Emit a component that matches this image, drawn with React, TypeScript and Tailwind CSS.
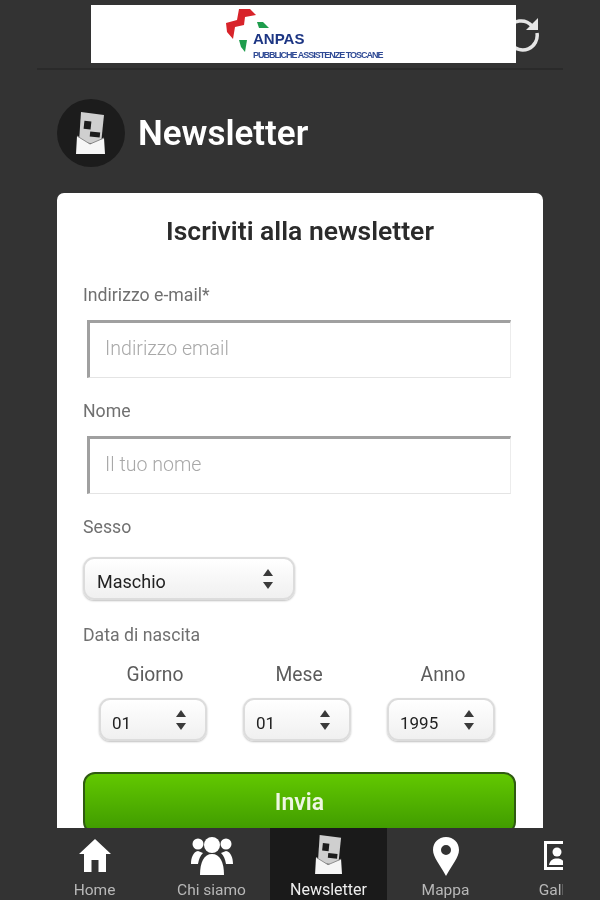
function NewsIcon({ w, h }: { w: number; h: number }) {
  return (
    <svg width={w} height={h} viewBox="0 0 30 42" fill="none">
      <polygon points="5,0 28,3 25,32 3,30" fill="#cfcfcf" />
      <rect x="8" y="9" width="7" height="8" fill="#1c1c1c" transform="rotate(6 11 13)" />
      <rect x="14" y="20" width="10" height="5" fill="#1c1c1c" transform="rotate(6 19 22)" />
      <polygon points="1,24 14,32 28,26 29,42 0,42" fill="#f6f6f6" />
      <polyline points="1,24 14,32 28,26" stroke="#8a8a8a" strokeWidth="1" fill="none" />
    </svg>
  );
}

function Stepper() {
  return (
    <svg width="12" height="24" viewBox="0 0 12 24" fill="#3a3a3a">
      <polygon points="6,2 11,9 1,9" />
      <polygon points="1,15 11,15 6,22" />
    </svg>
  );
}

function HomeIcon() {
  return (
    <svg width="32" height="33" viewBox="0 0 32 33" fill="#fff" className="mb-[5px]">
      <path d="M16 0 L32 15 L27 15 L27 33 L19.5 33 L19.5 21 L12.5 21 L12.5 33 L5 33 L5 15 L0 15 Z" />
    </svg>
  );
}

function UsersIcon() {
  return (
    <svg width="42" height="38" viewBox="0 0 42 38" fill="#fff" className="mb-[2px]">
      <circle cx="7" cy="7" r="5.5" />
      <circle cx="35" cy="7" r="5.5" />
      <path d="M7 14 C2 15 0 21 0 27 L7 27 C8 22 9 19 12 16 Z" />
      <path d="M35 14 C40 15 42 21 42 27 L35 27 C34 22 33 19 30 16 Z" />
      <circle cx="21" cy="8" r="8" />
      <path d="M21 17 C13 17 9 25 9 38 L33 38 C33 25 29 17 21 17 Z" />
    </svg>
  );
}

function PinIcon() {
  return (
    <svg width="26" height="39" viewBox="0 0 26 39" className="mb-[1px]">
      <path fillRule="evenodd" fill="#fff" d="M13 0 C20.5 0 26 5.5 26 13 C26 20 19 28 13 39 C7 28 0 20 0 13 C0 5.5 5.5 0 13 0 Z M13 8 A5 5 0 1 0 13 18 A5 5 0 1 0 13 8 Z" />
    </svg>
  );
}

function GalleryIcon() {
  return (
    <svg width="38" height="29" viewBox="0 0 38 29" fill="none" className="mb-[7px]">
      <rect x="1.5" y="1.5" width="30" height="26" stroke="#fff" strokeWidth="3" />
      <circle cx="13" cy="11" r="4.5" fill="#fff" />
      <path d="M5 24 C6 19 9 17.5 13 17.5 S20 19 21 24 Z" fill="#fff" />
    </svg>
  );
}

function Field({ label, placeholder }: { label: string; placeholder: string }) {
  return (
    <div>
      <div className="text-[17.7px] leading-[20px] text-[#707070]">{label}</div>
      <div className="mt-[15px] ml-[4px] mr-[6px] flex h-[58px] items-center border-t-[3px] border-l-[3px] border-t-[#a0a0a0] border-l-[#a0a0a0] border-r border-b border-r-[#ececec] border-b-[#e4e4e4] bg-white pb-[2px] pl-[15px] text-[19.6px] font-light text-[#a8a8a8]">
        {placeholder}
      </div>
    </div>
  );
}

function Select({ value, className, textClass }: { value: string; className: string; textClass: string }) {
  return (
    <div className={`flex items-center justify-between rounded-[11px] border-2 border-[#dcdcdc] bg-gradient-to-b from-white to-[#f0f0f0] shadow-[0_1px_2px_rgba(0,0,0,0.25)] ${className}`}>
      <span className={`text-[#222] ${textClass}`}>{value}</span>
      <Stepper />
    </div>
  );
}

function DatePart({ label, value }: { label: string; value: string }) {
  return (
    <div className="flex w-[108px] flex-col items-center">
      <div className="pl-[4px] text-[19.3px] leading-[24px] text-[#5c5c5c]">{label}</div>
      <Select value={value} className="mt-[11px] h-[43px] w-[108px] pl-[11px] pr-[18px]" textClass="pt-[9px] text-[17px]" />
    </div>
  );
}

function NavItem({ label, active, icon }: { label: string; active?: boolean; icon: React.ReactNode }) {
  return (
    <div className={`flex w-[117px] shrink-0 flex-col items-center ${active ? "bg-[#1a1a1a]" : ""}`}>
      <div className="flex h-[50px] items-end justify-center">{icon}</div>
      <div className={`mt-[3px] whitespace-nowrap leading-[20px] ${active ? "text-[16px] text-[#eeeeee]" : "text-[15.5px] text-[#b8b8b8]"}`}>{label}</div>
    </div>
  );
}

export default function App() {
  return (
    <div className="flex h-[900px] w-[600px] flex-col overflow-hidden bg-[#333333] font-['Roboto',sans-serif] blur-[0.6px]">
      <div className="mx-[37px] flex h-[70px] shrink-0 border-b-2 border-[#2a2a2a] pt-[5px]">
        <div className="relative z-10 ml-[54px] flex h-[58px] w-[425px] shrink-0 items-start bg-white pl-[134px] pt-[3px]">
          <svg width="46" height="46" viewBox="0 0 46 46" className="shrink-0">
            <polygon points="14,1 25,1 31,7 20,9 19,17 10,19 8,31 2,24 1,15 12,12" fill="#d8232a" />
            <polygon points="32,14 38,14 44,20 34,20" fill="#1f9d4d" />
            <polygon points="14,32 22,32 20,44 16,39" fill="#1f9d4d" />
          </svg>
          <div className="-ml-[18px] pt-[23px] font-['Liberation_Sans',sans-serif] text-[#1c3583]">
            <div className="text-[15px] font-bold leading-[16px]">ANPAS</div>
            <div className="mt-[3px] whitespace-nowrap text-[9px] font-bold leading-[10px] tracking-[-1px] text-[#2f4a95]">PUBBLICHE ASSISTENZE TOSCANE</div>
          </div>
        </div>
        <svg width="34" height="36" viewBox="0 0 34 36" fill="none" className="ml-[-11px] mt-[12px] shrink-0">
          <path d="M27 9 A14.5 14.5 0 0 0 3 12" stroke="#e6e6e6" strokeWidth="3.5" />
          <path d="M32 16 A14.5 14.5 0 0 1 6 27" stroke="#e6e6e6" strokeWidth="3.5" />
          <polygon points="33,1 33,13 21,13" fill="#e6e6e6" />
        </svg>
      </div>

      <div className="min-h-0 flex-1 overflow-hidden px-[57px]">
        <div className="mt-[28px] flex h-[70px] items-center">
          <div className="flex h-[68px] w-[68px] items-center justify-center rounded-full bg-[#1c1c1c]">
            <NewsIcon w={30} h={44} />
          </div>
          <div className="ml-[13px] pt-[2px] text-[35px] font-semibold text-white">Newsletter</div>
        </div>

        <div className="mt-[25px] h-[700px] rounded-t-[7px] bg-white px-[26px]">
          <div className="pt-[20px] text-center text-[26.5px] font-semibold leading-[36px] text-[#2b2b2b]">Iscriviti alla newsletter</div>
          <div className="mt-[36px]">
            <Field label="Indirizzo e-mail*" placeholder="Indirizzo email" />
          </div>
          <div className="mt-[23px]">
            <Field label="Nome" placeholder="Il tuo nome" />
          </div>
          <div className="mt-[23px] text-[17.7px] leading-[20px] text-[#707070]">Sesso</div>
          <Select value="Maschio" className="mt-[20px] h-[43px] w-[212px] pl-[12px] pr-[19px]" textClass="pt-[6px] text-[18px]" />
          <div className="mt-[25px] text-[17.7px] leading-[20px] text-[#707070]">Data di nascita</div>
          <div className="mt-[18px] flex gap-[36px] pl-[16px]">
            <DatePart label="Giorno" value="01" />
            <DatePart label="Mese" value="01" />
            <DatePart label="Anno" value="1995" />
          </div>
          <div className="mt-[31px] mr-[1px] flex h-[62px] items-center justify-center rounded-[12px] border-2 border-[#2f5a12] bg-gradient-to-b from-[#62c800] to-[#3f9a00] text-[23px] font-semibold text-[#eef6e2]">
            Invia
          </div>
        </div>
      </div>

      <div className="mx-[36px] flex h-[72px] w-[527px] shrink-0 overflow-hidden">
        <NavItem label="Home" icon={<HomeIcon />} />
        <NavItem label="Chi siamo" icon={<UsersIcon />} />
        <NavItem label="Newsletter" active icon={<div className="mb-[3px]"><NewsIcon w={28} h={39} /></div>} />
        <NavItem label="Mappa" icon={<PinIcon />} />
        <NavItem label="Gallery" icon={<GalleryIcon />} />
      </div>
    </div>
  );
}
